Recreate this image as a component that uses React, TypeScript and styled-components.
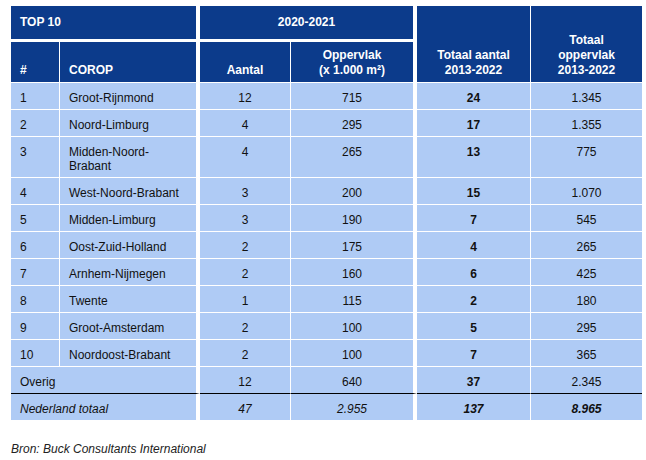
import styled, { createGlobalStyle } from "styled-components";

const GlobalStyle = createGlobalStyle`
  body {
    margin: 0;
    background: #fff;
    font-family: "Liberation Sans", Arial, sans-serif;
  }
`;

type Edge = "thin" | "gap" | "none";
const edges: Record<Edge, string> = {
  thin: "1px solid #fff",
  gap: "4px solid #fff",
  none: "0",
};

const Page = styled.div`
  width: 646px;
  height: 460px;
  box-sizing: border-box;
  padding: 6px 0 0 11px;
`;

const Table = styled.table`
  border-collapse: separate;
  border-spacing: 0;
  table-layout: fixed;
  width: 631px;
  font-size: 12px;
  color: #111;
`;

const Col = styled.col<{ $w: number }>`
  width: ${(p) => p.$w}px;
`;

const Th = styled.th<{
  $align?: "left" | "center";
  $right?: Edge;
  $valign?: "middle" | "bottom";
  $bottom?: number;
  $pad?: string;
}>`
  background: #0c3b8b;
  color: #fff;
  font-weight: bold;
  line-height: 15px;
  text-align: ${(p) => p.$align ?? "center"};
  vertical-align: ${(p) => p.$valign ?? "bottom"};
  padding: ${(p) => p.$pad ?? "6px 9px 4px"};
  border-right: ${(p) => edges[p.$right ?? "none"]};
  border-bottom: ${(p) => p.$bottom ?? 1}px solid #fff;
`;

const Td = styled.td<{
  $align?: "left" | "center";
  $right?: Edge;
  $bold?: boolean;
  $italic?: boolean;
  $rule?: boolean;
}>`
  background: #afcbf5;
  line-height: 14px;
  padding: 8px 9px 4px;
  vertical-align: top;
  text-align: ${(p) => p.$align ?? "center"};
  font-weight: ${(p) => (p.$bold ? "bold" : "normal")};
  font-style: ${(p) => (p.$italic ? "italic" : "normal")};
  border-right: ${(p) => edges[p.$right ?? "none"]};
  border-bottom: 1px solid ${(p) => (p.$rule ? "#000" : "#fff")};
`;

const Source = styled.p`
  margin: 21px 0 0;
  font-size: 12px;
  line-height: 14px;
  font-style: italic;
  color: #222;
`;

const rows = [
  ["1", "Groot-Rijnmond", "12", "715", "24", "1.345"],
  ["2", "Noord-Limburg", "4", "295", "17", "1.355"],
  ["3", "Midden-Noord-Brabant", "4", "265", "13", "775"],
  ["4", "West-Noord-Brabant", "3", "200", "15", "1.070"],
  ["5", "Midden-Limburg", "3", "190", "7", "545"],
  ["6", "Oost-Zuid-Holland", "2", "175", "4", "265"],
  ["7", "Arnhem-Nijmegen", "2", "160", "6", "425"],
  ["8", "Twente", "1", "115", "2", "180"],
  ["9", "Groot-Amsterdam", "2", "100", "5", "295"],
  ["10", "Noordoost-Brabant", "2", "100", "7", "365"],
];

export default function App() {
  return (
    <Page>
      <GlobalStyle />
      <Table>
        <colgroup>
          <Col $w={49} />
          <Col $w={140} />
          <Col $w={91} />
          <Col $w={126} />
          <Col $w={114} />
          <Col $w={111} />
        </colgroup>
        <thead>
          <tr>
            <Th colSpan={2} $align="left" $valign="middle" $right="gap" $bottom={3} $pad="9px 9px">
              TOP 10
            </Th>
            <Th colSpan={2} $valign="middle" $right="gap" $bottom={3} $pad="9px 9px">
              2020-2021
            </Th>
            <Th rowSpan={2} $right="thin">
              Totaal aantal
              <br />
              2013-2022
            </Th>
            <Th rowSpan={2}>
              Totaal
              <br />
              oppervlak
              <br />
              2013-2022
            </Th>
          </tr>
          <tr>
            <Th $align="left" $right="thin">#</Th>
            <Th $align="left" $right="gap">COROP</Th>
            <Th $right="thin">Aantal</Th>
            <Th $right="gap">
              Oppervlak
              <br />
              (x 1.000 m²)
            </Th>
          </tr>
        </thead>
        <tbody>
          {rows.map(([nr, name, aantal, opp, totAantal, totOpp]) => (
            <tr key={nr}>
              <Td $align="left" $right="thin">{nr}</Td>
              <Td $align="left" $right="gap">{name}</Td>
              <Td $right="thin">{aantal}</Td>
              <Td $right="gap">{opp}</Td>
              <Td $right="thin" $bold>{totAantal}</Td>
              <Td>{totOpp}</Td>
            </tr>
          ))}
          <tr>
            <Td colSpan={2} $align="left" $right="gap" $rule>Overig</Td>
            <Td $right="thin" $rule>12</Td>
            <Td $right="gap" $rule>640</Td>
            <Td $right="thin" $bold $rule>37</Td>
            <Td $rule>2.345</Td>
          </tr>
          <tr>
            <Td colSpan={2} $align="left" $right="gap" $italic>Nederland totaal</Td>
            <Td $right="thin" $italic>47</Td>
            <Td $right="gap" $italic>2.955</Td>
            <Td $right="thin" $bold $italic>137</Td>
            <Td $bold $italic>8.965</Td>
          </tr>
        </tbody>
      </Table>
      <Source>Bron: Buck Consultants International</Source>
    </Page>
  );
}
